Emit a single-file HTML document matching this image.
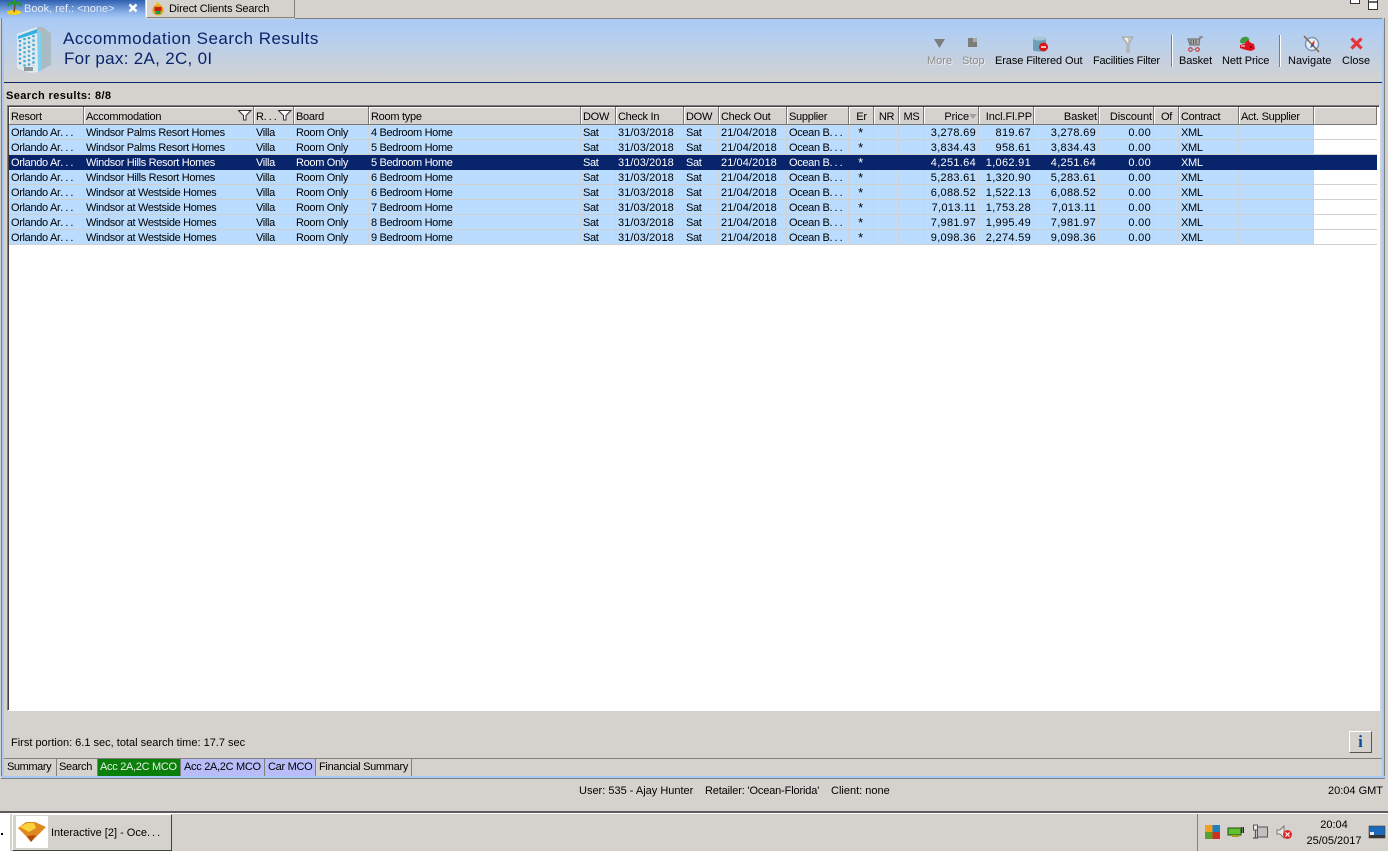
<!DOCTYPE html>
<html><head><meta charset="utf-8"><style>
*{box-sizing:border-box}
html,body{margin:0;padding:0;width:1388px;height:851px;overflow:hidden;background:#d5d2cd;font-family:"Liberation Sans",sans-serif;font-size:11px;color:#000}
.a{position:absolute;white-space:nowrap}
svg{position:absolute;overflow:visible}
table{position:absolute;left:9px;top:107px;width:1368px;border-collapse:separate;border-spacing:0;table-layout:fixed;font-size:11px}
th{height:18px;padding:2px 2px 0;vertical-align:top;font-weight:normal;text-align:left;background:#d5d2cd;box-shadow:inset -1px -1px 0 #777,inset 1px 1px 0 #fff;overflow:hidden;white-space:nowrap;line-height:16px;letter-spacing:-.28px}
td{height:15px;padding:2px 2px 0;background:#b9dcff;border-right:1px solid #cfd3d6;border-bottom:1px solid #cfcfcf;overflow:hidden;white-space:nowrap;line-height:12px;letter-spacing:-.33px}
td.n{letter-spacing:.3px}
td.t{letter-spacing:.08px}
td.c{font-size:13px;padding-top:1px;padding-right:3px}
th.r{letter-spacing:-.08px}
i{font-style:normal;letter-spacing:2px}
.r{text-align:right}.c{text-align:center}
td.e{background:#fff;border-right:0}
tr.s td{background:#08246b;color:#fff;border-color:#08246b}
.tool{position:absolute;top:55px;white-space:nowrap;font-size:11px;line-height:13px}
.dis{color:#8c8c8c;text-shadow:1px 1px 0 #f0f0f0}
.bt{position:absolute;top:759px;height:17px;line-height:17px;padding:0 3px;border-right:1px solid #808080;white-space:nowrap;letter-spacing:-.3px}
</style></head><body>

<!-- top tabs -->
<div class="a" style="left:0;top:0;width:145px;height:19px;background:linear-gradient(#2f5fb0,#8fb6ec 70%,#a9c9f5)"></div>
<div class="a" style="left:146px;top:0;width:149px;height:18px;background:#d5d2cd;border-right:1px solid #808080;border-bottom:1px solid #808080;border-left:1px solid #fff"></div>
<div class="a" style="left:295px;top:18px;width:1090px;height:1px;background:#808080"></div>
<div class="a" style="left:24px;top:2px;color:#e8eef8;line-height:13px;padding-top:1px">Book, ref.: &lt;none&gt;</div>
<svg style="left:127px;top:2px" width="12" height="12"><path d="M2.5 2.5L9.5 9.5M9.5 2.5L2.5 9.5" stroke="#fff" stroke-width="2.6"/></svg>
<svg style="left:5px;top:0" width="18" height="16"><ellipse cx="9" cy="12.5" rx="7" ry="2.5" fill="#f5d020"/><path d="M9 12L10 5" stroke="#7a5020" stroke-width="1.5"/><path d="M10 5C6 1 4 3 3 6M10 5C13 1 15 3 16 6M10 5C8 2 9 0 11 0" stroke="#1e9a28" stroke-width="2" fill="none"/></svg>
<div class="a" style="left:169px;top:3px;line-height:13px;letter-spacing:-.15px">Direct Clients Search</div>
<svg style="left:151px;top:1px" width="14" height="15"><circle cx="7" cy="9" r="5.5" fill="#e8a018"/><rect x="3.5" y="6" width="7" height="4" fill="#c82018"/><rect x="4.5" y="10" width="5" height="3" fill="#18a048"/><circle cx="7" cy="3" r="1.6" fill="#f0c020"/></svg>
<svg style="left:1350px;top:0" width="11" height="5"><path d="M.5 -1H9.5V3.5H.5z" fill="#fff" stroke="#333"/></svg>
<svg style="left:1368px;top:0" width="11" height="11"><path d="M.5 -1H9.5V9.5H.5z" fill="#fff" stroke="#333"/><path d="M1 2H9" stroke="#333" stroke-width="1.5"/></svg>

<!-- frame -->
<div class="a" style="left:1px;top:18px;width:3px;height:760px;background:#a9c9f5;border-left:1px solid #808080"></div>
<div class="a" style="left:1382px;top:18px;width:3px;height:760px;background:#a9c9f5;border-right:1px solid #808080"></div>
<div class="a" style="left:1px;top:776px;width:1384px;height:3px;background:#a9c9f5;border-bottom:1px solid #808080"></div>

<!-- banner -->
<div class="a" style="left:4px;top:19px;width:1378px;height:63px;background:linear-gradient(#a9c9f5,#b6cfef 30%,#d3d2d0 100%)"></div>
<div class="a" style="left:4px;top:82px;width:1378px;height:1px;background:#0a246a"></div>

<svg style="left:0;top:0" width="60" height="80">
<path d="M17 34L37 27L43 27L51 33V65L38 72L29 73L17 68z" fill="#e4eaec"/>
<path d="M37 27L43 27L51 33V65L38 72z" fill="#a9bcc4"/>
<path d="M38 32L41 33V70L38 72z" fill="#7fd0ee"/>
<path d="M18 36L37 29V33L18 39z" fill="#35aee2"/>
<g stroke="#3fa8d8" stroke-width="2.4" stroke-dasharray="2.2 2.2" fill="none">
<path d="M20 40V66M24.500 38V67M29 37V67M33.500 35V66"/></g>
<path d="M24 67H33V71H24z" fill="#8a9aa0"/></svg>

<div class="a" style="left:63px;top:29px;font-size:17px;line-height:20px;color:#0a246a;letter-spacing:.5px">Accommodation Search Results</div>
<div class="a" style="left:64px;top:49px;font-size:17px;line-height:20px;color:#0a246a;letter-spacing:.3px">For pax: 2A, 2C, 0I</div>

<!-- toolbar -->
<svg style="left:934px;top:38px" width="12" height="11"><path d="M0 1H11L5.500 10z" fill="#7d7d7d"/></svg>
<svg style="left:968px;top:38px" width="10" height="10"><rect width="9" height="9" fill="#7d7d7d"/><rect x="5" width="4" height="4" fill="#aaa"/></svg>
<svg style="left:1032px;top:36px" width="18" height="17"><path d="M1 2.500C1 .5 14 .5 14 2.500V14C14 16 1 16 1 14z" fill="#6f9fb8"/><ellipse cx="7.500" cy="2.500" rx="6.500" ry="2" fill="#a8c8d8"/><circle cx="11.500" cy="11" r="4.500" fill="#d81818"/><path d="M9 11H14" stroke="#fff" stroke-width="1.500"/></svg>
<svg style="left:1121px;top:36px" width="14" height="17"><path d="M1 1H12L8 8V16H6V8z" fill="#c4c4c4" stroke="#9a9a9a" stroke-width=".7"/><path d="M3 2H7L7 7z" fill="#f0f0f0"/></svg>
<svg style="left:1187px;top:36px" width="17" height="16"><path d="M16 1H13L12 9H3L1 3H13" stroke="#777" stroke-width="1.200" fill="#aaa"/><path d="M4 4V8M6.500 4V8M9 4V8" stroke="#555"/><circle cx="3.500" cy="13.500" r="1.800" fill="none" stroke="#d02020"/><circle cx="10.500" cy="13.500" r="1.800" fill="none" stroke="#d02020"/><path d="M5 13.500H9" stroke="#888"/></svg>
<svg style="left:1239px;top:36px" width="17" height="16"><path d="M1 6C1 2 5 0 8 1C11 2 11 5 8 6C5 7 3 9 1 6z" fill="#3e9a3e"/><path d="M5 8L9 4L12 7L15 8L16 13L12 15L7 14L1 12V9z" fill="#e01020"/><path d="M2 10H6" stroke="#fff"/><circle cx="12" cy="11" r="1.200" fill="#800"/></svg>
<svg style="left:1303px;top:35px" width="17" height="18"><circle cx="9" cy="9" r="6.500" fill="#e8eef4" stroke="#7898b8" stroke-width="1.500"/><path d="M1 1L16 17" stroke="#806040" stroke-width="1.400"/><path d="M11.500 5L8.500 9L11 11z" fill="#d03020"/><path d="M8.500 9L7 13L11 11z" fill="#3060c0"/></svg>
<svg style="left:1350px;top:37px" width="13" height="13"><path d="M1.500 1.500L11.500 11.500M11.500 1.500L1.500 11.500" stroke="#e8323c" stroke-width="3.200"/></svg>
<div class="a" style="left:1171px;top:35px;width:1px;height:32px;background:#6f7f90;border-right:1px solid #fff;box-sizing:content-box"></div>
<div class="a" style="left:1279px;top:35px;width:1px;height:32px;background:#6f7f90;border-right:1px solid #fff;box-sizing:content-box"></div>
<div class="tool dis" style="left:927px">More</div>
<div class="tool dis" style="left:962px">Stop</div>
<div class="tool" style="left:995px;letter-spacing:-.1px">Erase Filtered Out</div>
<div class="tool" style="left:1093px;letter-spacing:-.2px">Facilities Filter</div>
<div class="tool" style="left:1179px;letter-spacing:-.1px">Basket</div>
<div class="tool" style="left:1222px;letter-spacing:-.1px">Nett Price</div>
<div class="tool" style="left:1288px">Navigate</div>
<div class="tool" style="left:1342px">Close</div>

<div class="a" style="left:6px;top:89px;font-weight:bold;line-height:14px;letter-spacing:.4px">Search results: 8/8</div>

<!-- table box -->
<div class="a" style="left:7px;top:105px;width:1373px;height:606px;background:#fff;border:1px solid #808080;border-right-color:#fff;border-bottom-color:#fff;box-shadow:inset 1px 1px 0 #404040"></div>

<table>
<colgroup><col style="width:75px"><col style="width:170px"><col style="width:40px"><col style="width:75px"><col style="width:212px"><col style="width:35px"><col style="width:68px"><col style="width:35px"><col style="width:68px"><col style="width:62px"><col style="width:25px"><col style="width:25px"><col style="width:25px"><col style="width:55px"><col style="width:55px"><col style="width:65px"><col style="width:55px"><col style="width:25px"><col style="width:60px"><col style="width:75px"><col style="width:63px"></colgroup>
<tr><th>Resort</th><th>Accommodation</th><th>R<i>...</i></th><th>Board</th><th>Room type</th><th>DOW</th><th>Check In</th><th>DOW</th><th>Check Out</th><th>Supplier</th><th class="c">Er</th><th class="c">NR</th><th class="c">MS</th><th class="r" style="padding-right:10px">Price</th><th class="r">Incl.Fl.PP</th><th class="r">Basket</th><th class="r">Discount</th><th class="c">Of</th><th>Contract</th><th>Act. Supplier</th><th></th></tr>
<tr><td>Orlando Ar<i>...</i></td><td>Windsor Palms Resort Homes</td><td>Villa</td><td>Room Only</td><td>4 Bedroom Home</td><td>Sat</td><td class="t">31/03/2018</td><td>Sat</td><td class="t">21/04/2018</td><td>Ocean B<i>...</i></td><td class="c">*</td><td></td><td></td><td class="r n">3,278.69</td><td class="r n">819.67</td><td class="r n">3,278.69</td><td class="r n">0.00</td><td></td><td>XML</td><td></td><td class="e"></td></tr>
<tr><td>Orlando Ar<i>...</i></td><td>Windsor Palms Resort Homes</td><td>Villa</td><td>Room Only</td><td>5 Bedroom Home</td><td>Sat</td><td class="t">31/03/2018</td><td>Sat</td><td class="t">21/04/2018</td><td>Ocean B<i>...</i></td><td class="c">*</td><td></td><td></td><td class="r n">3,834.43</td><td class="r n">958.61</td><td class="r n">3,834.43</td><td class="r n">0.00</td><td></td><td>XML</td><td></td><td class="e"></td></tr>
<tr class="s"><td>Orlando Ar<i>...</i></td><td>Windsor Hills Resort Homes</td><td>Villa</td><td>Room Only</td><td>5 Bedroom Home</td><td>Sat</td><td class="t">31/03/2018</td><td>Sat</td><td class="t">21/04/2018</td><td>Ocean B<i>...</i></td><td class="c">*</td><td></td><td></td><td class="r n">4,251.64</td><td class="r n">1,062.91</td><td class="r n">4,251.64</td><td class="r n">0.00</td><td></td><td>XML</td><td></td><td></td></tr>
<tr><td>Orlando Ar<i>...</i></td><td>Windsor Hills Resort Homes</td><td>Villa</td><td>Room Only</td><td>6 Bedroom Home</td><td>Sat</td><td class="t">31/03/2018</td><td>Sat</td><td class="t">21/04/2018</td><td>Ocean B<i>...</i></td><td class="c">*</td><td></td><td></td><td class="r n">5,283.61</td><td class="r n">1,320.90</td><td class="r n">5,283.61</td><td class="r n">0.00</td><td></td><td>XML</td><td></td><td class="e"></td></tr>
<tr><td>Orlando Ar<i>...</i></td><td>Windsor at Westside Homes</td><td>Villa</td><td>Room Only</td><td>6 Bedroom Home</td><td>Sat</td><td class="t">31/03/2018</td><td>Sat</td><td class="t">21/04/2018</td><td>Ocean B<i>...</i></td><td class="c">*</td><td></td><td></td><td class="r n">6,088.52</td><td class="r n">1,522.13</td><td class="r n">6,088.52</td><td class="r n">0.00</td><td></td><td>XML</td><td></td><td class="e"></td></tr>
<tr><td>Orlando Ar<i>...</i></td><td>Windsor at Westside Homes</td><td>Villa</td><td>Room Only</td><td>7 Bedroom Home</td><td>Sat</td><td class="t">31/03/2018</td><td>Sat</td><td class="t">21/04/2018</td><td>Ocean B<i>...</i></td><td class="c">*</td><td></td><td></td><td class="r n">7,013.11</td><td class="r n">1,753.28</td><td class="r n">7,013.11</td><td class="r n">0.00</td><td></td><td>XML</td><td></td><td class="e"></td></tr>
<tr><td>Orlando Ar<i>...</i></td><td>Windsor at Westside Homes</td><td>Villa</td><td>Room Only</td><td>8 Bedroom Home</td><td>Sat</td><td class="t">31/03/2018</td><td>Sat</td><td class="t">21/04/2018</td><td>Ocean B<i>...</i></td><td class="c">*</td><td></td><td></td><td class="r n">7,981.97</td><td class="r n">1,995.49</td><td class="r n">7,981.97</td><td class="r n">0.00</td><td></td><td>XML</td><td></td><td class="e"></td></tr>
<tr><td>Orlando Ar<i>...</i></td><td>Windsor at Westside Homes</td><td>Villa</td><td>Room Only</td><td>9 Bedroom Home</td><td>Sat</td><td class="t">31/03/2018</td><td>Sat</td><td class="t">21/04/2018</td><td>Ocean B<i>...</i></td><td class="c">*</td><td></td><td></td><td class="r n">9,098.36</td><td class="r n">2,274.59</td><td class="r n">9,098.36</td><td class="r n">0.00</td><td></td><td>XML</td><td></td><td class="e"></td></tr>
</table>

<!-- header filter + sort icons -->
<svg style="left:238px;top:110px" width="14" height="11"><path d="M.5 .5H13L8 5.500V10H5.500V5.500z" fill="#fff" stroke="#333"/></svg>
<svg style="left:278px;top:110px" width="14" height="11"><path d="M.5 .5H13L8 5.500V10H5.500V5.500z" fill="#fff" stroke="#333"/></svg>
<svg style="left:969px;top:114px" width="8" height="5"><path d="M0 0H8L4 5z" fill="#a0a0a0"/></svg>

<!-- bottom -->
<div class="a" style="left:11px;top:736px;line-height:14px">First portion: 6.1 sec, total search time: 17.7 sec</div>
<div class="a" style="left:1349px;top:731px;width:23px;height:22px;background:#d5d2cd;border:1px solid;border-color:#fff #555 #555 #fff;color:#0a4a96;font:bold 17px/20px 'Liberation Serif',serif;text-align:center">i</div>

<div class="a" style="left:4px;top:758px;width:1378px;height:1px;background:#808080"></div>
<div class="bt" style="left:4px;width:53px;letter-spacing:-.4px">Summary</div>
<div class="bt" style="left:57px;width:41px;padding-left:2px">Search</div>
<div class="bt" style="left:98px;width:83px;padding-left:2px;background:#0a800a;color:#e8f0e8">Acc 2A,2C MCO</div>
<div class="bt" style="left:181px;width:84px;background:#b8bdfa">Acc 2A,2C MCO</div>
<div class="bt" style="left:265px;width:51px;background:#b8bdfa">Car MCO</div>
<div class="bt" style="left:316px;width:96px">Financial Summary</div>

<div class="a" style="left:579px;top:784px;line-height:15px">User: 535 - Ajay Hunter</div>
<div class="a" style="left:705px;top:784px;line-height:15px;letter-spacing:-.15px">Retailer: 'Ocean-Florida'</div>
<div class="a" style="left:831px;top:784px;line-height:15px">Client: none</div>
<div class="a" style="left:1328px;top:784px;line-height:15px">20:04 GMT</div>

<!-- taskbar -->
<div class="a" style="left:0;top:811px;width:1388px;height:2px;background:#5c5c5c;border-bottom:1px solid #fff;box-sizing:content-box"></div>
<div class="a" style="left:0;top:814px;width:10px;height:37px;background:#fff"></div>
<div class="a" style="left:1px;top:833px;width:2px;height:2px;background:#000"></div>
<div class="a" style="left:12px;top:814px;width:160px;height:37px;background:#d5d2cd;border:1px solid;border-color:#fff #404040 #404040 #fff"></div>
<div class="a" style="left:16px;top:816px;width:32px;height:32px;background:#fff"></div>
<svg style="left:17px;top:821px" width="30" height="22"><path d="M1 7L9 1H18L29 6L21 14L14 21L8 14z" fill="#e08820"/><path d="M3 6L10 2H17L19 7L12 11z" fill="#fbd23c"/><path d="M14 21L10 15L19 14z" fill="#b04810"/></svg>
<div class="a" style="left:51px;top:826px;line-height:14px">Interactive [2] - Oce<i>...</i></div>

<div class="a" style="left:1197px;top:814px;width:191px;height:37px;border-left:1px solid #808080;background:#d5d2cd"></div>
<svg style="left:1204px;top:824px" width="17" height="16"><rect x="1" y="1" width="7.500" height="7" fill="#f0a020"/><rect x="8.500" y="1" width="7.500" height="7" fill="#2080c0"/><rect x="1" y="8" width="7.500" height="7" fill="#58a030"/><rect x="8.500" y="8" width="7.500" height="7" fill="#d03020"/></svg>
<svg style="left:1228px;top:826px" width="16" height="12"><rect y="2" width="13" height="7" fill="#60c030" stroke="#205010" stroke-width="1"/><path d="M14 1V7M15.500 1V7" stroke="#222"/><path d="M4 10H11" stroke="#a0a020" stroke-width="2"/></svg>
<svg style="left:1252px;top:824px" width="17" height="16"><rect x="5.500" y="3" width="10" height="10" fill="#c0c0c0" stroke="#555"/><rect x="1.500" y="1" width="4" height="5" fill="#eee" stroke="#555"/><path d="M3.500 6V14M1 14H6" stroke="#555" stroke-width="1.200"/></svg>
<svg style="left:1276px;top:825px" width="17" height="15"><path d="M1 5H4L8 1V13L4 9H1z" fill="#e8e8e8" stroke="#777"/><circle cx="11.500" cy="9.500" r="4.500" fill="#e02828"/><path d="M9.500 7.500L13.500 11.500M13.500 7.500L9.500 11.500" stroke="#fff" stroke-width="1.200"/></svg>
<div class="a" style="left:1305px;top:817px;width:58px;text-align:center;line-height:16px">20:04<br>25/05/2017</div>
<svg style="left:1369px;top:826px" width="16" height="13"><rect width="16" height="12" fill="#1a68b8" stroke="#444" stroke-width=".6"/><rect y="9" width="16" height="3" fill="#333"/><rect x="1" y="6" width="4" height="3" fill="#e8e8f8"/></svg>
</body></html>
